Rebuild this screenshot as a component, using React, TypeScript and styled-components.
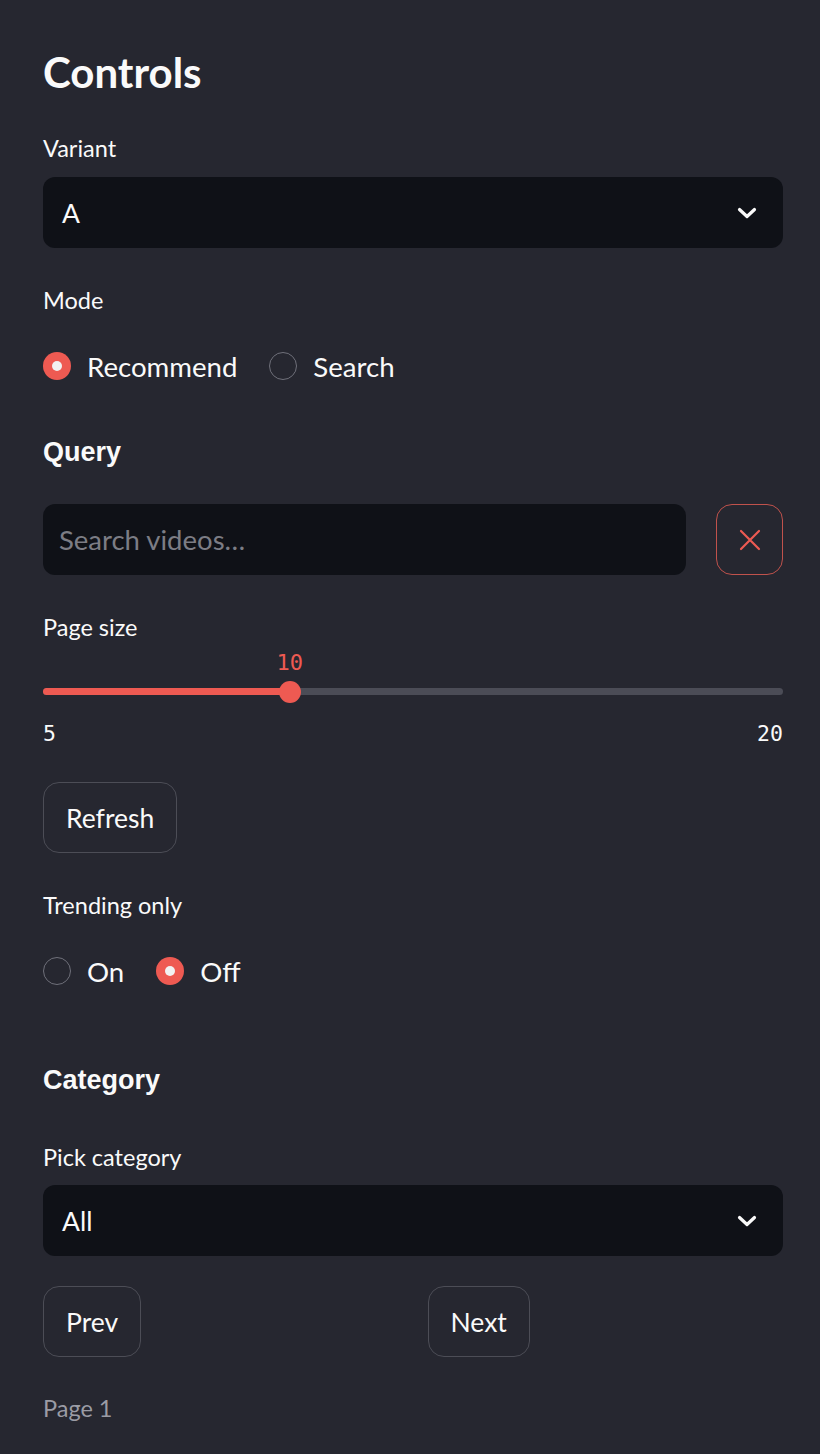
import React, { useState } from 'react';
import styled, { createGlobalStyle } from 'styled-components';

const RED = '#ee5a52';

const GlobalStyle = createGlobalStyle`
  * {
    margin: 0;
    padding: 0;
    box-sizing: border-box;
  }
  body {
    background: #262730;
    font-family: Lato, "Noto Sans", sans-serif;
    color: #fafafa;
  }
`;

const Sidebar = styled.div`
  min-height: 1454px;
  padding: 48px 37px 0 43px;
  background: #262730;
`;

const Title = styled.h1`
  font-size: 42px;
  line-height: 48px;
  font-weight: 700;
`;

const SubHeading = styled.h3<{ $top: number }>`
  margin-top: ${p => p.$top}px;
  font-family: "Liberation Sans", Arial, sans-serif;
  font-size: 27px;
  line-height: 36px;
  font-weight: 700;
`;

const Label = styled.div<{ $top: number }>`
  margin-top: ${p => p.$top}px;
  font-size: 23.5px;
  line-height: 32px;
`;

const SelectBox = styled.div<{ $top?: number }>`
  margin-top: ${p => p.$top ?? 13}px;
  height: 71px;
  background: #0f1117;
  border-radius: 12px;
  display: flex;
  align-items: center;
  justify-content: space-between;
  padding: 0 26px 0 19px;
  font-size: 26.5px;
`;

const RadioRow = styled.div`
  margin-top: 30px;
  height: 40px;
  display: flex;
  align-items: center;
  gap: 32px;
`;

const RadioOption = styled.label`
  display: flex;
  align-items: center;
  gap: 16px;
  font-size: 27.6px;
  cursor: pointer;
`;

const RadioDot = styled.span<{ $on: boolean }>`
  width: 28px;
  height: 28px;
  border-radius: 50%;
  display: flex;
  align-items: center;
  justify-content: center;
  background: ${p => (p.$on ? RED : 'transparent')};
  border: ${p => (p.$on ? 'none' : '1.5px solid #6f707a')};
  &::after {
    content: '';
    width: 10px;
    height: 10px;
    border-radius: 50%;
    background: #f2f2f2;
    display: ${p => (p.$on ? 'block' : 'none')};
  }
`;

const InputRow = styled.div`
  margin-top: 34px;
  display: flex;
  gap: 30px;
`;

const TextInput = styled.input`
  flex: 1;
  height: 71px;
  background: #0f1117;
  border: none;
  border-radius: 12px;
  padding: 0 16px;
  font-family: Lato, "Noto Sans", sans-serif;
  font-size: 27.5px;
  color: #fafafa;
  outline: none;
  &::placeholder {
    color: #7c7d85;
  }
`;

const ClearButton = styled.button`
  width: 67px;
  height: 71px;
  border-radius: 16px;
  border: 1px solid #c0524c;
  background: #262730;
  display: flex;
  align-items: center;
  justify-content: center;
  cursor: pointer;
`;

const SliderWrap = styled.div`
  margin-top: 8px;
`;

const SliderTrackArea = styled.div`
  position: relative;
  height: 58px;
  display: flex;
  align-items: flex-end;
  padding-bottom: 14px;
`;

const Track = styled.div`
  width: 100%;
  height: 7px;
  border-radius: 4px;
  background: #4b4c56;
  position: relative;
`;

const TrackFill = styled.div`
  position: absolute;
  left: 0;
  top: 0;
  bottom: 0;
  background: ${RED};
  border-radius: 4px;
`;

const Thumb = styled.div`
  position: absolute;
  top: 50%;
  width: 22px;
  height: 22px;
  margin: -11px 0 0 -11px;
  border-radius: 50%;
  background: ${RED};
`;

const ThumbValue = styled.div`
  position: absolute;
  top: 0;
  transform: translateX(-50%);
  font-family: "DejaVu Sans Mono", "Liberation Mono", monospace;
  font-size: 22px;
  line-height: 24px;
  color: ${RED};
`;

const MinMax = styled.div`
  margin-top: 13px;
  display: flex;
  justify-content: space-between;
  font-family: "DejaVu Sans Mono", "Liberation Mono", monospace;
  font-size: 21.5px;
  line-height: 24px;
`;

const Button = styled.button<{ $top?: number }>`
  margin-top: ${p => p.$top ?? 0}px;
  height: 71px;
  padding: 0 22px;
  border-radius: 16px;
  border: 1px solid #4c4d56;
  background: #262730;
  color: #fafafa;
  font-family: Lato, "Noto Sans", sans-serif;
  font-size: 26.5px;
  cursor: pointer;
`;

const ButtonGrid = styled.div`
  margin-top: 30px;
  display: grid;
  grid-template-columns: 1fr 1fr;
  gap: 29px;
  justify-items: start;
`;

const Caption = styled.div`
  margin-top: 35px;
  font-size: 23.5px;
  line-height: 32px;
  color: #9b9ca5;
`;

const Chevron = () => (
  <svg width="20" height="12" viewBox="0 0 20 12" fill="none">
    <path d="M2.5 2.5 L10 9.5 L17.5 2.5" stroke="#fafafa" strokeWidth="3.2" strokeLinecap="round" strokeLinejoin="round" />
  </svg>
);

const CloseIcon = () => (
  <svg width="22" height="22" viewBox="0 0 22 22" fill="none">
    <path d="M2 2 L20 20 M20 2 L2 20" stroke={RED} strokeWidth="2.2" strokeLinecap="round" />
  </svg>
);

interface RadioGroupProps {
  options: string[];
  value: string;
  onChange: (v: string) => void;
}

const RadioGroup = ({ options, value, onChange }: RadioGroupProps) => (
  <RadioRow>
    {options.map(o => (
      <RadioOption key={o} onClick={() => onChange(o)}>
        <RadioDot $on={o === value} />
        {o}
      </RadioOption>
    ))}
  </RadioRow>
);

function App() {
  const [mode, setMode] = useState('Recommend');
  const [trending, setTrending] = useState('Off');
  const [query, setQuery] = useState('');
  const min = 5;
  const max = 20;
  const pageSize = 10;
  const pct = ((pageSize - min) / (max - min)) * 100;

  return (
    <Sidebar>
      <GlobalStyle />
      <Title>Controls</Title>

      <Label $top={36}>Variant</Label>
      <SelectBox>
        A
        <Chevron />
      </SelectBox>

      <Label $top={36}>Mode</Label>
      <RadioGroup options={['Recommend', 'Search']} value={mode} onChange={setMode} />

      <SubHeading $top={48}>Query</SubHeading>
      <InputRow>
        <TextInput placeholder="Search videos…" value={query} onChange={e => setQuery(e.target.value)} />
        <ClearButton onClick={() => setQuery('')}>
          <CloseIcon />
        </ClearButton>
      </InputRow>

      <Label $top={36}>Page size</Label>
      <SliderWrap>
        <SliderTrackArea>
          <ThumbValue style={{ left: `${pct}%` }}>{pageSize}</ThumbValue>
          <Track>
            <TrackFill style={{ width: `${pct}%` }} />
            <Thumb style={{ left: `${pct}%` }} />
          </Track>
        </SliderTrackArea>
        <MinMax>
          <span>{min}</span>
          <span>{max}</span>
        </MinMax>
      </SliderWrap>

      <Button $top={36}>Refresh</Button>

      <Label $top={36}>Trending only</Label>
      <RadioGroup options={['On', 'Off']} value={trending} onChange={setTrending} />

      <SubHeading $top={71}>Category</SubHeading>

      <Label $top={43}>Pick category</Label>
      <SelectBox $top={12}>
        All
        <Chevron />
      </SelectBox>

      <ButtonGrid>
        <Button>Prev</Button>
        <Button>Next</Button>
      </ButtonGrid>

      <Caption>Page 1</Caption>
    </Sidebar>
  );
}

export default App;
